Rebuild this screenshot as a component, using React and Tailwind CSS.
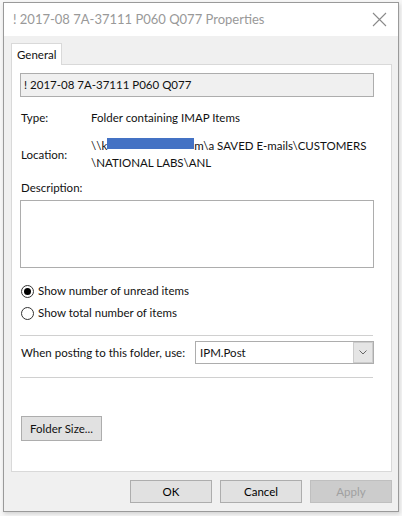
import React from "react";

const font = { fontFamily: 'Lato, "Noto Sans", sans-serif' };

const Radio = ({ checked, label }) => (
  <div className="flex items-center h-[22px]">
    <span className="w-[13px] h-[13px] rounded-full border border-[#333333] bg-white flex items-center justify-center mr-[4px]">
      {checked && <span className="w-[7px] h-[7px] rounded-full bg-black" />}
    </span>
    <span>{label}</span>
  </div>
);

const Btn = ({ children, disabled }) => (
  <button
    className={
      disabled
        ? "w-[82px] h-[23px] border border-[#bfbfbf] bg-[#cccccc] text-[#a0a0a0]"
        : "w-[82px] h-[23px] border border-[#adadad] bg-[#e1e1e1] text-black"
    }
  >
    {children}
  </button>
);

export default function App() {
  return (
    <div className="w-[402px] h-[516px] bg-[#f7f7f7] overflow-hidden text-[11.5px] text-[#111111]" style={font}>
      <div className="ml-[3px] mt-[2px] w-[396px] h-[510px] border border-[#9a9a9a] bg-[#f0f0f0] shadow-[1px_2px_4px_rgba(0,0,0,0.15)] flex flex-col">
        {/* title bar */}
        <div className="h-[33px] bg-white flex items-center justify-between pl-[9px] pr-[11px]">
          <span className="text-[13px] text-[#999999] whitespace-nowrap">! 2017-08 7A-37111 P060 Q077 Properties</span>
          <svg width="15" height="15" viewBox="0 0 15 15">
            <path d="M1 1 L14 14 M14 1 L1 14" stroke="#8a8a8a" strokeWidth="1.1" fill="none" />
          </svg>
        </div>

        <div className="flex flex-col pl-[7px] pr-[6px] pt-[7px]">
          {/* tab */}
          <div className="flex">
            <div className="h-[22px] w-[51px] bg-white border border-b-0 border-[#d9d9d9] flex items-center pl-[5px] -mb-px relative z-10">
              General
            </div>
          </div>

          {/* panel */}
          <div className="h-[408px] w-[381px] bg-white border border-[#d9d9d9] pl-[8px] pt-[8px] flex flex-col whitespace-nowrap">
            <div className="w-[354px] h-[24px] bg-[#f0f0f0] border border-[#adadad] flex items-center pl-[3px]">
              ! 2017-08 7A-37111 P060 Q077
            </div>

            <div className="flex items-center h-[18px] mt-[12px] pl-[1px]">
              <span className="w-[70px]">Type:</span>
              <span>Folder containing IMAP Items</span>
            </div>

            <div className="flex items-center mt-[10px] pl-[1px] leading-[17px]">
              <span className="w-[70px]">Location:</span>
              <div className="flex flex-col">
                <span className="flex items-center">
                  {"\\\\k"}
                  <span className="inline-block w-[87px] h-[11px] bg-[#4472c4] -mt-[4px]" />
                  {"m\\a SAVED E-mails\\CUSTOMERS"}
                </span>
                <span>{"\\NATIONAL LABS\\ANL"}</span>
              </div>
            </div>

            <div className="h-[18px] flex items-center mt-[8px] pl-[1px]">Description:</div>
            <div className="w-[354px] h-[68px] border border-[#adadad] bg-white mt-[3px]" />

            <div className="mt-[12px] pl-[1px]">
              <Radio checked label="Show number of unread items" />
              <Radio label="Show total number of items" />
            </div>

            <div className="w-[353px] h-px bg-[#d0d0d0] mt-[11px]" />

            <div className="flex items-center mt-[5px] h-[23px] pl-[1px]">
              <span className="w-[174px]">When posting to this folder, use:</span>
              <div className="w-[179px] h-[23px] border border-[#adadad] bg-white flex items-center justify-between">
                <span className="pl-[4px]">IPM.Post</span>
                <span className="w-[20px] h-[21px] bg-[#e5e5e5] border border-[#cccccc] flex items-center justify-center">
                  <svg width="8" height="5" viewBox="0 0 8 5">
                    <path d="M0.5 0.5 L4 4 L7.5 0.5" stroke="#666" strokeWidth="1" fill="none" />
                  </svg>
                </span>
              </div>
            </div>

            <div className="w-[353px] h-px bg-[#d0d0d0] mt-[13px]" />

            <div className="mt-[38px] pl-[1px]">
              <button className="w-[81px] h-[25px] border border-[#adadad] bg-[#e1e1e1]">Folder Size...</button>
            </div>
          </div>

          {/* footer */}
          <div className="flex justify-end gap-[8px] mt-[8px]">
            <Btn>OK</Btn>
            <Btn>Cancel</Btn>
            <Btn disabled>Apply</Btn>
          </div>
        </div>
      </div>
    </div>
  );
}
